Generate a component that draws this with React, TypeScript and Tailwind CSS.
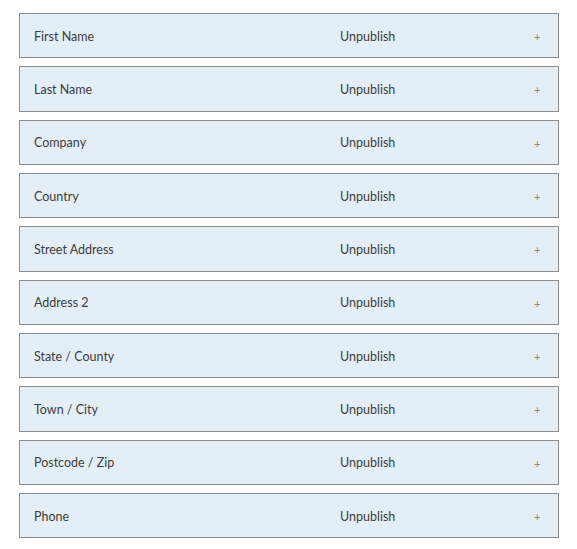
import React from "react";

const fields = [
  "First Name",
  "Last Name",
  "Company",
  "Country",
  "Street Address",
  "Address 2",
  "State / County",
  "Town / City",
  "Postcode / Zip",
  "Phone",
];

export default function App() {
  return (
    <div className="min-h-[549px] bg-white pt-[13px] pl-[19px] font-['Lato','Noto_Sans',sans-serif]">
      <div className="flex w-[540px] flex-col gap-[8px]">
        {fields.map((name) => (
          <div
            key={name}
            className="flex h-[45.33px] items-center border border-[#8c8c8c] bg-[#e4eef6] pt-[3px] pl-[14px] text-[12.5px] text-[#3d3d3d]"
          >
            <span className="w-[306px]">{name}</span>
            <span className="w-[194px]">Unpublish</span>
            <span className="text-[11px] text-[#8a8a8a]">+</span>
          </div>
        ))}
      </div>
    </div>
  );
}
